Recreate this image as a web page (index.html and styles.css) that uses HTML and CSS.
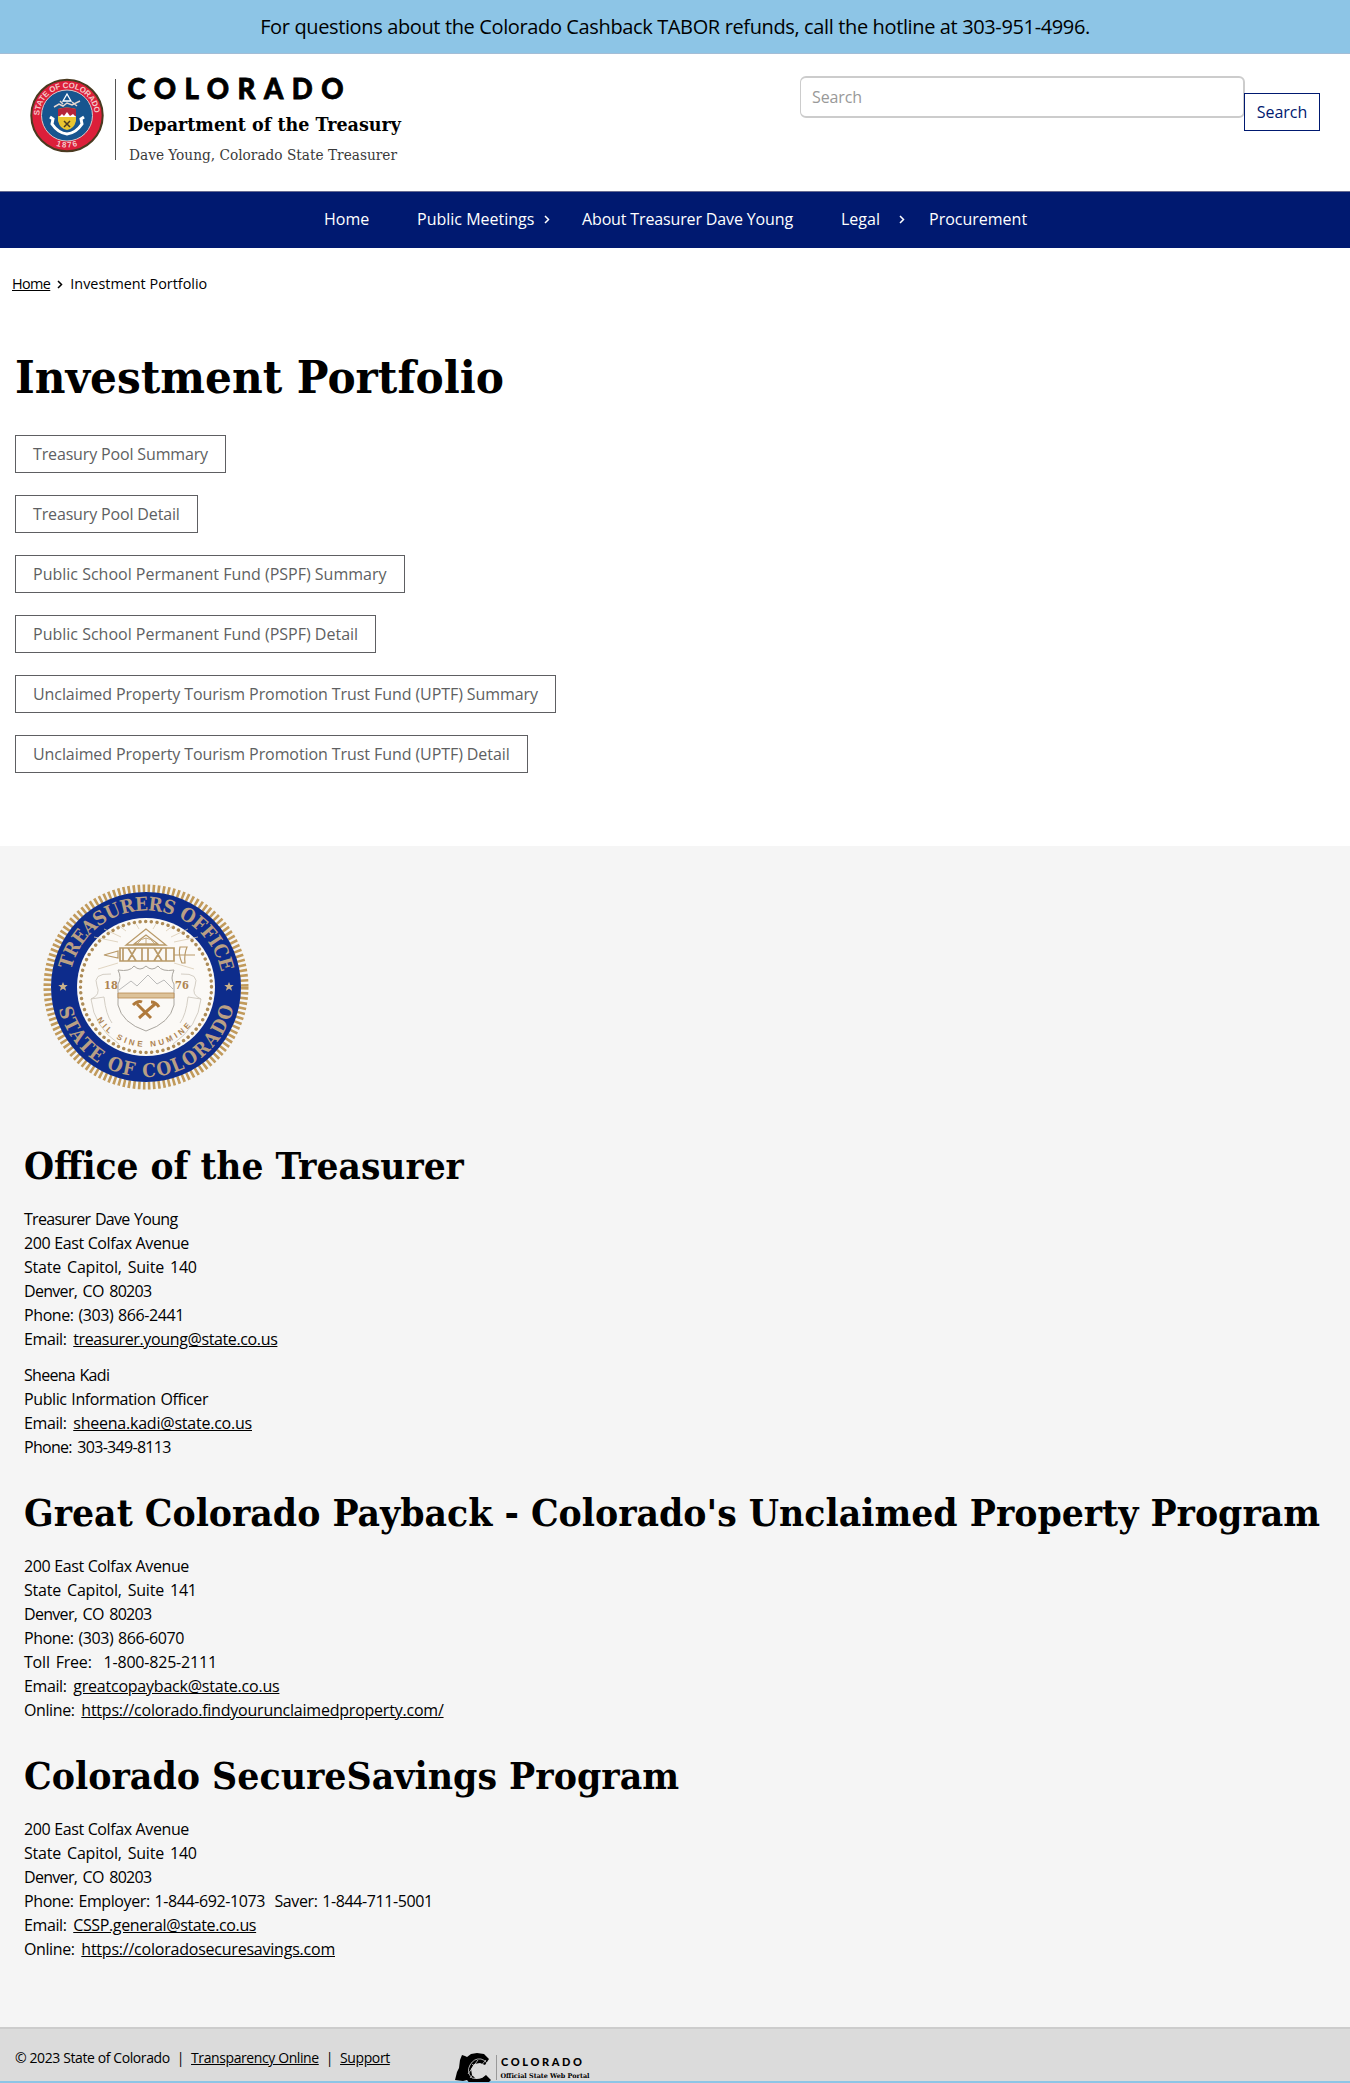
FILE: index.html
```html
<!DOCTYPE html>
<html lang="en">
<head>
<meta charset="utf-8">
<title>Investment Portfolio | Colorado Department of the Treasury</title>
<link rel="stylesheet" href="styles.css">
</head>
<body>
<div class="alert"><span>For questions about the Colorado Cashback TABOR refunds, call the hotline at 303-951-4996.</span></div>
<header class="header">
  <svg class="brand" width="380" height="96" viewBox="28 70 380 96">
    <defs>
      <path id="sealTop" d="M39.5 115.500 a27.500 27.500 0 0 1 55 0"/>
      <path id="sealLow" d="M35 115.500 a32 32 0 0 0 64 0"/>
    </defs>
    <circle cx="67" cy="115.500" r="35.700" fill="#dc1f3a" stroke="#4a3a20" stroke-width="2"/>
    <circle cx="67" cy="115.500" r="25.500" fill="#17558f" stroke="#d9c9c9" stroke-width="1"/>
    <text class="seal-text"><textPath href="#sealTop" textLength="84">STATE OF COLORADO</textPath></text>
    <text class="seal-text"><textPath href="#sealLow" startOffset="39" textLength="22">1876</textPath></text>
    <path d="M67 94l4 7h-8z" fill="none" stroke="#fff" stroke-width="1.300"/>
    <path d="M54 107l5-3 4 2 4-3 5 2 8-4M60 101l3 3M72 102l5 4" fill="none" stroke="#e6d7cf" stroke-width="1.500"/>
    <path d="M58 109q9-3 18 0v12q-2 8-9 9-7-1-9-9z" fill="#e8c52f"/>
    <path d="M58 109q9-3 18 0v7h-18z" fill="#b5253a"/>
    <path d="M59 117l3-3 2 2 3-4 3 4 3-2 3 3z" fill="#fff"/>
    <path d="M64 121l6 6m0-6l-6 6" stroke="#4a3a20" stroke-width="1.500"/>
    <path d="M50 117l3 2-1 5q6 9 15 10 9-1 15-10l-1-5 3-2" fill="none" stroke="#fff" stroke-width="3"/>
    <path d="M115.500 79v81" stroke="#555"/>
    <text class="brand-state" x="127.500" y="99" textLength="216">COLORADO</text>
    <text class="brand-dept" x="128" y="131" textLength="273" lengthAdjust="spacingAndGlyphs">Department of the Treasury</text>
    <text class="brand-name" x="129" y="160" textLength="268" lengthAdjust="spacingAndGlyphs">Dave Young, Colorado State Treasurer</text>
  </svg>
  <form class="search">
    <input class="search-input" type="text" placeholder="Search" aria-label="Search">
    <button class="search-button" type="button">Search</button>
  </form>
</header>
<nav class="nav">
  <a class="nav-home">Home</a>
  <a class="nav-meet">Public Meetings<svg class="chev" viewBox="0 0 6 9"><path d="M1 1l3.500 3.500L1 8"/></svg></a>
  <a class="nav-about">About Treasurer Dave Young</a>
  <a class="nav-legal">Legal<svg class="chev" viewBox="0 0 6 9"><path d="M1 1l3.500 3.500L1 8"/></svg></a>
  <a class="nav-proc">Procurement</a>
</nav>
<div class="crumbs"><a>Home</a><svg class="chev" viewBox="0 0 6 9"><path d="M1 1l3.500 3.500L1 8"/></svg><span>Investment Portfolio</span></div>
<main class="main">
  <h1><span>Investment Portfolio</span></h1>
  <div class="buttons">
    <a class="short">Treasury Pool Summary</a>
    <a class="short">Treasury Pool Detail</a>
    <a>Public School Permanent Fund (PSPF) Summary</a>
    <a>Public School Permanent Fund (PSPF) Detail</a>
    <a class="long">Unclaimed Property Tourism Promotion Trust Fund (UPTF) Summary</a>
    <a class="long">Unclaimed Property Tourism Promotion Trust Fund (UPTF) Detail</a>
  </div>
</main>
<section class="info">
  <svg class="seal" width="212" height="212" viewBox="-106 -106 212 212">
    <defs>
      <path id="ringTop" d="M-76.500 0a76.500 76.500 0 0 1 153 0"/>
      <path id="ringLow" d="M-90 0a90 90 0 0 0 180 0"/>
      <path id="motto" d="M-56 17a58 58 0 0 0 112 0"/>
    </defs>
    <circle r="98.500" fill="none" stroke="#c19a5b" stroke-width="8" stroke-dasharray="2.600 2.400"/>
    <circle r="95" fill="#0d2c8c"/>
    <circle r="69" fill="#fbf9f6"/>
    <circle r="65.500" fill="none" stroke="#ad8c58" stroke-width="3.400" stroke-linecap="round" stroke-dasharray="0.100 5.600"/>
    <text class="ring-text"><textPath href="#ringTop" startOffset="17" textLength="208">TREASURERS OFFICE</textPath></text>
    <text class="ring-text"><textPath href="#ringLow" startOffset="22" textLength="240">STATE OF COLORADO</textPath></text>
    <path d="M-83-5l1.300 3h3.400l-2.600 2.200 1 3.500-3.100-2-3.100 2 1-3.500-2.600-2.200h3.400z" fill="#c9b18b"/>
    <path d="M83-5l1.300 3h3.400l-2.600 2.200 1 3.500-3.100-2-3.100 2 1-3.500-2.600-2.200h3.400z" fill="#c9b18b"/>
    <g fill="none" stroke="#d9cbb4" stroke-width=".8">
      <path d="M-20-56l-8-6M-25-50l-17-8M-28-45l-24-5M20-56l8-6M25-50l17-8M28-45l24-5M-28-24l-20 6M28-24l20 6M-7-58l-3-5M7-58l3-5"/>
      <path d="M0-58l-20 16h40zM0-52l-12 9h24z" stroke="#b99a69" stroke-width="1.300"/>
      <path d="M-9-43q9-12 18 0M0-49v6" stroke="#b99a69"/>
      <path d="M-26-39h54v13h-54zM-18-39l8 13m0-13l-8 13M-4-39v13M2-39v13M8-39l8 13m0-13l-8 13M20-39v13M-23-39v13" stroke="#b99a69" stroke-width="1.700"/>
      <path d="M-42-32l14-4v7zM28-32h21M34-40q-2 7 2 16h3q-1-9 2-16z" stroke="#b99a69" stroke-width="1.200"/>
      <path d="M-28-17q12 2 16-4q6 6 12 0q6 6 12 0q4 6 16 4q-4 9 0 14v21q-4 18-28 26q-24-8-28-26V-3q4-6 0-14z" stroke="#aaa69f" stroke-width="1"/>
      <path d="M-27 3L-15-6l6 5 11-11 9 9 7-4 9 9" stroke="#aaa"/>
      <path d="M-28 6h56v5h-56z" fill="#dcc29a" stroke="#b98b50"/>
      <path d="M-35-13q-19-1-14 12 4 9-6 13l13-2q2 18 8 26M35-13q19-1 14 12-4 9 6 13l-13-2q-2 18-8 26M-55 12q3 28 28 45M55 12q-3 28-28 45" stroke="#c9c3b8"/>
    </g>
    <path d="M-9 17l14 14M9 17L-7 31M-13 18q5-5 9-3M5 15q5 0 8 5" fill="none" stroke="#b07a3c" stroke-width="3"/>
    <text class="year" x="-42" y="2">18</text>
    <text class="year" x="29" y="2">76</text>
    <text class="motto"><textPath href="#motto" startOffset="17" textLength="110">NIL SINE NUMINE</textPath></text>
  </svg>
  <h2 class="h-office"><span>Office of the Treasurer</span></h2>
  <p><span class="tight">Treasurer Dave Young</span><br><span class="street">200 East Colfax Avenue</span><br><span class="suite">State Capitol, Suite 140</span><br><span class="city">Denver, CO 80203</span><br>Phone: (303) 866-2441<br>Email: <a class="short-link">treasurer.young@state.co.us</a></p>
  <p><span class="tight">Sheena Kadi</span><br>Public Information Officer<br>Email: <a>sheena.kadi@state.co.us</a><br><span class="city">Phone: 303-349-8113</span></p>
  <h2 class="h-payback"><span>Great Colorado Payback - Colorado's Unclaimed Property Program</span></h2>
  <p><span class="street">200 East Colfax Avenue</span><br><span class="suite">State Capitol, Suite 141</span><br><span class="city">Denver, CO 80203</span><br>Phone: (303) 866-6070<br><span class="suite">Toll Free: &nbsp;1-800-825-2111</span><br>Email: <a>greatcopayback@state.co.us</a><br>Online: <a>https://colorado.findyourunclaimedproperty.com/</a></p>
  <h2 class="h-savings"><span>Colorado SecureSavings Program</span></h2>
  <p><span class="street">200 East Colfax Avenue</span><br><span class="suite">State Capitol, Suite 140</span><br><span class="city">Denver, CO 80203</span><br>Phone: Employer: 1-844-692-1073 &nbsp;Saver: 1-844-711-5001<br>Email: <a class="short-link">CSSP.general@state.co.us</a><br>Online: <a>https://coloradosecuresavings.com</a></p>
</section>
<footer class="footer">
  <div class="legal"><span>© 2023 State of Colorado</span><i>|</i><a>Transparency Online</a><i>|</i><a>Support</a></div>
  <svg class="portal" width="140" height="30" viewBox="453 2052 140 30">
    <path d="M455 2080l2-8 2-4 1-8 2-5 3 1 2 1 4-3 6-1 7 1 5 5-4 6-5-2-6 1-3 5 1 6 4 4 6-1 4-3 5 5-5 5-8 1-7-1-4-5-4 1z" fill="#000"/>
    <path d="M472 2078q-6-6-2-13t11-6q7 2 7 9t-8 10q-5 1-8 0M470 2078l16-18M472 2064l13 12M478 2060l-10 14" fill="none" stroke="#d5d5d5" stroke-width=".8"/>
    <path d="M496.500 2055v25" stroke="#999"/>
    <text class="portal-state" x="501" y="2065.500" textLength="81">COLORADO</text>
    <text class="portal-sub" x="500.500" y="2077.500" textLength="89" lengthAdjust="spacingAndGlyphs">Official State Web Portal</text>
  </svg>
</footer>
</body>
</html>
```
FILE: styles.css
```css
* { box-sizing: border-box; }
body {
  margin: 0;
  background: #fff;
  color: #000;
  font-family: "Open Sans", "Noto Sans", sans-serif;
  font-size: 16px;
  line-height: 24px;
}
.alert {
  height: 54px;
  padding-top: 12px;
  background: #8dc5e6;
  border-bottom: 1px solid #a3bdd6;
  text-align: center;
  font-size: 20px;
  line-height: 30px;
  letter-spacing: -0.37px;
}
.header {
  display: flex;
  justify-content: space-between;
  height: 137px;
  padding: 16px 30px 0 28px;
}
.brand { display: block; }
.seal-text { font: bold 8px "Liberation Sans", sans-serif; fill: #f4c9c9; }
.brand-state { font: 900 27.500px Lato, sans-serif; stroke: #000; stroke-width: .8px; }
.brand-dept { font: bold 18.500px "DejaVu Serif Condensed", "DejaVu Serif", serif; }
.brand-name { font: 15.500px "DejaVu Serif Condensed", "DejaVu Serif", serif; fill: #3a3a3a; }
.search { display: flex; padding-top: 6px; }
.search-input {
  width: 445px;
  height: 42px;
  padding: 0 11px;
  border: 2px solid #ccc;
  border-left-width: 1px;
  border-radius: 6px;
  font: 16px "Open Sans", sans-serif;
  background: #fff;
}
.search-input::placeholder { color: #999; letter-spacing: -0.1px; }
.search-button {
  width: 76px;
  height: 38px;
  margin: 17px 0 0 -1px;
  padding: 0;
  border: 1px solid #001970;
  background: #fff;
  color: #001970;
  font: 16px "Open Sans", sans-serif;
}
.nav {
  display: flex;
  height: 57px;
  padding: 15px 0 0 324px;
  background: #001970;
  border-top: 1px solid #666a90;
  color: #fff;
}
.nav a { display: flex; align-items: center; height: 24px; white-space: nowrap; }
.nav-home { width: 93px; }
.nav-meet { width: 165px; gap: 10px; }
.nav-about { width: 259px; letter-spacing: -0.14px; }
.nav-legal { width: 88px; gap: 19px; }
.chev { width: 6px; height: 9px; fill: none; stroke: currentColor; stroke-width: 1.500; }
.crumbs {
  display: flex;
  align-items: center;
  gap: 7px;
  height: 24px;
  margin: 24px 0 0 12px;
  font-size: 14.400px;
}
.crumbs a { letter-spacing: -0.6px; }
.crumbs a, .info a, .legal a { text-decoration: underline; }
.main { height: 550px; padding: 54px 15px 0; }
h1, h2 { margin: 0; font-family: "DejaVu Serif Condensed", "DejaVu Serif", serif; font-weight: bold; white-space: nowrap; }
h1 { font-size: 45px; line-height: 56px; }
h1 span, h2 span { display: inline-block; transform-origin: left; }
h1 span { transform: scaleX(1.044); }
.h-office span { transform: scaleX(1.01); }
.h-payback span { transform: scaleX(1.0166); }
.h-savings span { transform: scaleX(1.019); }
.buttons { display: flex; flex-direction: column; align-items: flex-start; gap: 22px; margin-top: 29px; }
.buttons a {
  height: 38px;
  padding: 6px 17px;
  border: 1px solid #5e5f62;
  color: #5e5f62;
  white-space: nowrap;
}
.buttons .short { letter-spacing: -0.15px; }
.buttons .long { letter-spacing: -0.08px; }
.info { height: 1181px; padding: 35px 24px 0; background: #f5f5f5; }
.seal { display: block; margin-left: 16px; }
h2 { margin-top: 30px; font-size: 38px; line-height: 48px; }
.seal + h2 { margin-top: 49px; }
p { margin: 12px 0 0; letter-spacing: -0.4px; word-spacing: 1px; }
h2 + p { margin-top: 17px; }
.info a { margin-left: 2px; letter-spacing: -0.22px; }
.info .short-link { letter-spacing: -0.37px; }
.tight { letter-spacing: -0.7px; }
.street { word-spacing: 0.2px; }
.suite { letter-spacing: -0.2px; word-spacing: 2px; }
.city { letter-spacing: -0.7px; word-spacing: 2px; }
.ring-text { font: bold 19px "DejaVu Serif Condensed", serif; fill: #b99f84; }
.year { font: bold 11px "DejaVu Serif Condensed", serif; fill: #ad8350; }
.motto { font: bold 8px "Liberation Sans", sans-serif; fill: #ad8350; }
.footer {
  display: flex;
  height: 56px;
  border-top: 2px solid #ccc;
  border-bottom: 2px solid #8dc5e6;
  background: #dbdbdb;
  padding-left: 15px;
}
.legal { width: 438px; padding-top: 17px; font-size: 14px; letter-spacing: -0.4px; }
.legal i { font-style: normal; margin: 0 7px; }
.portal { margin-top: 23px; }
.portal-state { font: 900 11px Lato, sans-serif; }
.portal-sub { font: bold 6.500px "DejaVu Serif Condensed", serif; }
```
